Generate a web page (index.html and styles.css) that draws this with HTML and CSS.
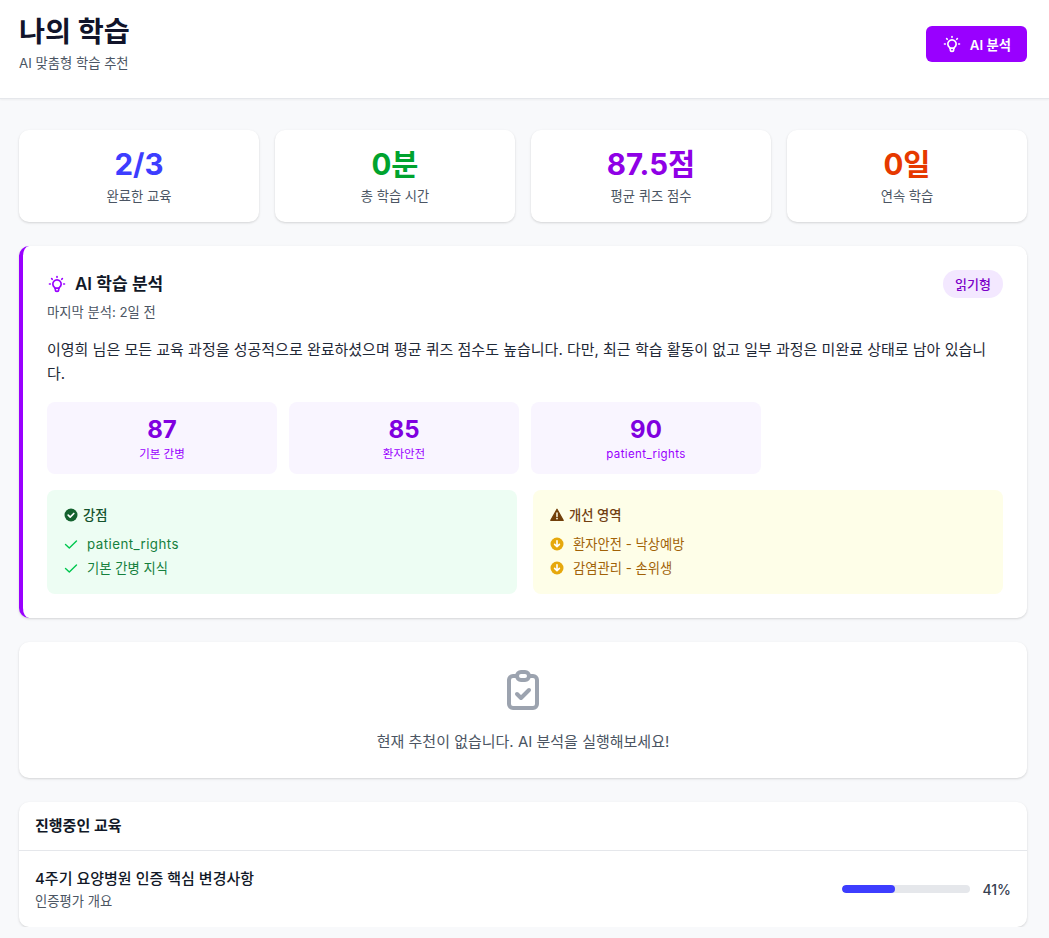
FILE: index.html
```html
<!DOCTYPE html>
<html lang="ko">
<head>
<meta charset="UTF-8">
<title>나의 학습</title>
<link rel="stylesheet" href="styles.css">
</head>
<body>
	<svg class="icon-defs" width="0" height="0">
		<defs>
			<symbol id="bulb" viewBox="0 0 24 24">
				<path d="M3 12h1m8-9v1m8 8h1M5.6 5.6l.7.7m12.1-.7l-.7.7"/>
				<path d="M9 16a5 5 0 1 1 6 0a3.5 3.5 0 0 0-1 3a2 2 0 0 1-4 0a3.5 3.5 0 0 0-1-3"/>
				<path d="M9.7 17h4.6"/>
			</symbol>
		</defs>
	</svg>

	<header class="top">
		<div>
			<h1>나의 학습</h1>
			<p class="top-sub">AI 맞춤형 학습 추천</p>
		</div>
		<button class="btn-ai" type="button">
			<svg class="ico-bulb-small"><use href="#bulb"/></svg>
			AI 분석
		</button>
	</header>

	<main class="page">
		<section class="stats">
			<div class="card stat">
				<div class="stat-value blue">2/3</div>
				<div class="stat-label">완료한 교육</div>
			</div>
			<div class="card stat">
				<div class="stat-value green">0분</div>
				<div class="stat-label">총 학습 시간</div>
			</div>
			<div class="card stat">
				<div class="stat-value purple">87.5점</div>
				<div class="stat-label">평균 퀴즈 점수</div>
			</div>
			<div class="card stat">
				<div class="stat-value red">0일</div>
				<div class="stat-label">연속 학습</div>
			</div>
		</section>

		<section class="card analysis">
			<div class="analysis-head">
				<div>
					<h2><svg class="ico-bulb"><use href="#bulb"/></svg>AI 학습 분석</h2>
					<p class="analysis-date">마지막 분석: 2일 전</p>
				</div>
				<span class="badge">읽기형</span>
			</div>
			<p class="analysis-text">이영희 님은 모든 교육 과정을 성공적으로 완료하셨으며 평균 퀴즈 점수도 높습니다. 다만, 최근 학습 활동이 없고 일부 과정은 미완료 상태로 남아 있습니다.</p>
			<div class="scores">
				<div class="score">
					<div class="score-value">87</div>
					<div class="score-label">기본 간병</div>
				</div>
				<div class="score">
					<div class="score-value">85</div>
					<div class="score-label">환자안전</div>
				</div>
				<div class="score">
					<div class="score-value">90</div>
					<div class="score-label"><span class="latin">patient_rights</span></div>
				</div>
			</div>
			<div class="notes">
				<div class="note note-good">
					<h3>
						<svg class="ico-14" viewBox="0 0 14 14"><circle cx="7" cy="7" r="6.5" fill="#14622f"/><path d="M4.2 7.2l2 1.9 3.6-3.6" fill="none" stroke="#fff" stroke-width="1.7" stroke-linecap="round" stroke-linejoin="round"/></svg>
						강점
					</h3>
					<ul>
						<li><svg class="ico-14" viewBox="0 0 14 14"><path d="M1.5 7.5l3.8 3.6 7.2-7.2" fill="none" stroke="#00c74f" stroke-width="1.4" stroke-linecap="round" stroke-linejoin="round"/></svg><span class="latin">patient_rights</span></li>
						<li><svg class="ico-14" viewBox="0 0 14 14"><path d="M1.5 7.5l3.8 3.6 7.2-7.2" fill="none" stroke="#00c74f" stroke-width="1.4" stroke-linecap="round" stroke-linejoin="round"/></svg>기본 간병 지식</li>
					</ul>
				</div>
				<div class="note note-warn">
					<h3>
						<svg class="ico-14" viewBox="0 0 14 14"><path d="M7 1.2L13.2 12.4H.8z" fill="#713f0a" stroke="#713f0a" stroke-width="1.2" stroke-linejoin="round"/><path d="M7 5v3.4" stroke="#fefee8" stroke-width="1.5" stroke-linecap="round"/><circle cx="7" cy="10.6" r=".9" fill="#fefee8"/></svg>
						개선 영역
					</h3>
					<ul>
						<li><svg class="ico-14" viewBox="0 0 14 14"><circle cx="7" cy="7" r="6.5" fill="#e6a80c"/><path d="M7 3.8v6M4.6 7.4L7 9.8l2.4-2.4" fill="none" stroke="#fff" stroke-width="1.6" stroke-linecap="round" stroke-linejoin="round"/></svg>환자안전 - 낙상예방</li>
						<li><svg class="ico-14" viewBox="0 0 14 14"><circle cx="7" cy="7" r="6.5" fill="#e6a80c"/><path d="M7 3.8v6M4.6 7.4L7 9.8l2.4-2.4" fill="none" stroke="#fff" stroke-width="1.6" stroke-linecap="round" stroke-linejoin="round"/></svg>감염관리 - 손위생</li>
					</ul>
				</div>
			</div>
		</section>

		<section class="card empty">
			<svg class="ico-clip" viewBox="0 0 24 24">
				<path d="M9 5H7a2 2 0 0 0-2 2v12a2 2 0 0 0 2 2h10a2 2 0 0 0 2-2V7a2 2 0 0 0-2-2h-2"/>
				<path d="M9 5a2 2 0 0 1 2-2h2a2 2 0 0 1 2 2a2 2 0 0 1-2 2h-2a2 2 0 0 1-2-2z"/>
				<path d="M9 14l2 2l4-4"/>
			</svg>
			<p>현재 추천이 없습니다. AI 분석을 실행해보세요!</p>
		</section>

		<section class="card progress">
			<h2 class="progress-title">진행중인 교육</h2>
			<div class="course">
				<div>
					<div class="course-name">4주기 요양병원 인증 핵심 변경사항</div>
					<div class="course-sub">인증평가 개요</div>
				</div>
				<div class="course-progress">
					<div class="bar"><div class="bar-fill" style="width:41%"></div></div>
					<span class="percent">41%</span>
				</div>
			</div>
		</section>
	</main>
</body>
</html>
```

FILE: styles.css
```css
* {
	box-sizing: border-box;
}

body {
	margin: 0;
	background: #f8f9fb;
	color: #111827;
	font-family: Inter, "Noto Sans CJK KR", sans-serif;
}

h1, h2, h3, p, ul {
	margin: 0;
	padding: 0;
}

.icon-defs {
	position: absolute;
}

.latin {
	letter-spacing: 0.035em;
}

.top {
	display: flex;
	justify-content: space-between;
	align-items: flex-start;
	height: 99px;
	padding: 14px 22px 0 19px;
	background: #fff;
	border-bottom: 1px solid #e5e7eb;
	box-shadow: 0 1px 2px rgba(0,0,0,0.05);
}

.top h1 {
	font-size: 28.3px;
	line-height: 36px;
	font-weight: 700;
	color: #11142a;
}

.top-sub {
	margin-top: 4px;
	font-size: 13.3px;
	line-height: 18px;
	color: #4b5563;
}

.btn-ai {
	display: flex;
	align-items: center;
	gap: 8px;
	height: 36px;
	margin-top: 12px;
	padding: 0 16px;
	border: 0;
	border-radius: 6px;
	background: #9900ff;
	color: #fff;
	font: 600 13.3px Inter, "Noto Sans CJK KR", sans-serif;
}

.ico-bulb-small, .ico-bulb {
	width: 20px;
	height: 20px;
	fill: none;
	stroke-width: 2;
	stroke-linecap: round;
	stroke-linejoin: round;
}

.ico-bulb-small {
	stroke: #fff;
}

.ico-bulb {
	stroke: #9900ff;
}

.page {
	display: flex;
	flex-direction: column;
	gap: 24px;
	padding: 31px 22px 0 19px;
}

.card {
	background: #fff;
	border-radius: 10px;
	box-shadow: 0 1px 3px rgba(0,0,0,0.1), 0 1px 2px rgba(0,0,0,0.06);
}

.stats {
	display: grid;
	grid-template-columns: repeat(4, 1fr);
	gap: 16px;
}

.stat {
	height: 92px;
	padding-top: 16px;
	text-align: center;
}

.stat-value {
	font-size: 29.5px;
	line-height: 36px;
	font-weight: 700;
}

.blue { color: #3d3dff; }
.green { color: #00a32e; }
.purple { color: #8f00e6; }
.red { color: #e63900; }

.stat-label {
	margin-top: 4px;
	font-size: 13.3px;
	line-height: 20px;
	color: #4b5563;
}

.analysis {
	padding: 24px;
	border-left: 4px solid #9900ff;
}

.analysis-head {
	display: flex;
	justify-content: space-between;
	align-items: flex-start;
}

.analysis-head h2 {
	display: flex;
	align-items: center;
	gap: 8px;
	font-size: 17px;
	line-height: 28px;
	font-weight: 600;
}

.analysis-date {
	margin-top: 4px;
	font-size: 13.3px;
	line-height: 20px;
	color: #4b5563;
}

.badge {
	padding: 4px 12px;
	border-radius: 14px;
	background: #f3e8ff;
	color: #7c00c8;
	font-size: 13px;
	line-height: 20px;
	font-weight: 500;
}

.analysis-text {
	margin-top: 16px;
	font-size: 15px;
	line-height: 24px;
	color: #1f2937;
}

.scores {
	display: grid;
	grid-template-columns: repeat(3, 230px);
	gap: 12px;
	margin-top: 16px;
}

.score {
	height: 72px;
	padding-top: 12px;
	border-radius: 8px;
	background: #f9f5ff;
	text-align: center;
}

.score-value {
	font-size: 24px;
	line-height: 32px;
	font-weight: 700;
	color: #8000e0;
}

.score-label {
	font-size: 11.5px;
	line-height: 16px;
	color: #9900ff;
}

.notes {
	display: grid;
	grid-template-columns: 1fr 1fr;
	gap: 16px;
	margin-top: 16px;
}

.note {
	height: 104px;
	padding: 15px 16px 16px 17px;
	border-radius: 8px;
}

.note h3 {
	display: flex;
	align-items: center;
	gap: 5px;
	font-size: 13.3px;
	line-height: 20px;
	font-weight: 500;
}

.note ul {
	margin-top: 7px;
	list-style: none;
}

.note li {
	display: flex;
	align-items: center;
	gap: 9px;
	font-size: 13.3px;
	line-height: 24px;
}

.ico-14 {
	width: 14px;
	height: 14px;
	flex: none;
}

.note-good {
	background: #edfdf3;
}

.note-good h3 {
	color: #14532d;
}

.note-good li {
	color: #15803d;
}

.note-warn {
	background: #fefee8;
}

.note-warn h3 {
	color: #713f12;
}

.note-warn li {
	color: #a16207;
}

.empty {
	display: flex;
	flex-direction: column;
	align-items: center;
	height: 136px;
	padding-top: 24px;
}

.ico-clip {
	width: 48px;
	height: 48px;
	fill: none;
	stroke: #9ca3af;
	stroke-width: 2;
	stroke-linecap: round;
	stroke-linejoin: round;
}

.empty p {
	margin-top: 16px;
	font-size: 15px;
	line-height: 24px;
	color: #4b5563;
}

.progress-title {
	height: 49px;
	padding: 0 16px;
	border-bottom: 1px solid #e5e7eb;
	font-size: 15px;
	line-height: 48px;
	font-weight: 600;
}

.course {
	display: flex;
	justify-content: space-between;
	align-items: center;
	height: 76px;
	padding: 0 16px;
}

.course-name {
	font-size: 15px;
	line-height: 24px;
	font-weight: 500;
}

.course-sub {
	font-size: 13.3px;
	line-height: 20px;
	color: #4b5563;
}

.course-progress {
	display: flex;
	align-items: center;
	gap: 12px;
}

.bar {
	width: 128px;
	height: 8px;
	border-radius: 4px;
	background: #e5e7eb;
	overflow: hidden;
}

.bar-fill {
	height: 100%;
	border-radius: 4px;
	background: #3d3dff;
}

.percent {
	font-size: 14px;
	font-weight: 500;
	color: #374151;
}
```
